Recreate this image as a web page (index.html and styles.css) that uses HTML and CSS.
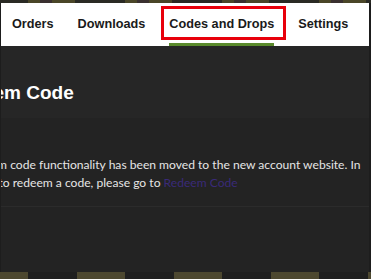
FILE: index.html
```html
<!DOCTYPE html>
<html lang="en">

<head>
    <meta charset="UTF-8">
    <meta name="viewport" content="width=device-width, initial-scale=1.0">
    <title>Codes and Drops</title>
    <link rel="stylesheet" href="styles.css">
</head>

<body>
    <div class="top-strip"></div>

    <nav class="tabs">
        <a class="tab" href="#">Orders</a>
        <a class="tab" href="#">Downloads</a>
        <a class="tab active marked" href="#"><span class="tab-label">Codes and Drops</span></a>
        <a class="tab" href="#">Settings</a>
    </nav>

    <main>
        <header class="title-bar">
            <h1>Redeem Code</h1>
        </header>

        <section class="content">
            <p>
                Redeem code functionality has been moved to the new account website. In<br>
                order to redeem a code, please go to <a href="#" class="link">Redeem Code</a>
            </p>
            <div class="divider"></div>
        </section>
    </main>

    <div class="bottom-strip"></div>
</body>

</html>
```

FILE: styles.css
```css
body {
    font-family: "Liberation Sans", Arial, sans-serif;
    background-color: #1d1d1d;
    margin: 0;
    padding: 0 2px 0 1px;
    overflow: hidden;
    height: 279px;
}

.top-strip {
    height: 3px;
    margin: 0 -2px 0 -1px;
    background: repeating-linear-gradient(90deg, #2a2a24 0, #2a2a24 28px, #4a4628 28px, #4a4628 40px, #3a3030 40px, #3a3030 52px, #4a4628 52px, #4a4628 75px, #2a2a24 75px, #2a2a24 97px);
}

.tabs {
    display: flex;
    height: 43px;
    background-color: #ffffff;
}

.tab {
    position: relative;
    display: flex;
    padding: 0 12px;
    color: #1a1a1a;
    font-weight: bold;
    font-size: 12.7px;
    text-decoration: none;
    align-items: center;
    padding-bottom: 1px;
}

.tab:first-child {
    padding-left: 11px;
}

.tab-label {
    display: flex;
    align-items: center;
    height: 100%;
    box-sizing: border-box;
    padding-top: 2px;
    border-bottom: 3px solid transparent;
}

.tab.active {
    padding-bottom: 0;
}

.tab.active .tab-label {
    border-bottom-color: #5a8a2c;
}

.tab.marked::after {
    content: "";
    position: absolute;
    left: 4px;
    right: 0;
    top: 3px;
    bottom: 6px;
    border: 3px solid #e8000b;
}

main {
    background-color: #232323;
}

.title-bar {
    background-color: #262626;
    height: 72px;
    overflow: hidden;
}

h1 {
    margin: 0 0 0 -54px;
    padding-top: 33px;
    color: #ffffff;
    font-size: 19px;
    line-height: 28px;
}

.content {
    height: 154px;
    overflow: hidden;
}

p {
    margin: 0 0 0 -34px;
    padding-top: 38px;
    text-indent: -3px;
    color: #e6e6e6;
    font-family: Lato, "Liberation Sans", sans-serif;
    font-size: 12.1px;
    line-height: 18px;
    white-space: nowrap;
}

.link {
    color: #3a2a78;
    text-decoration: none;
}

.divider {
    margin-top: 14px;
    height: 1px;
    background-color: #2b2b2b;
}

.bottom-strip {
    height: 7px;
    margin: 0 -2px 0 -1px;
    background: repeating-linear-gradient(90deg, #4d4830 0, #4d4830 28px, #1f1f1f 28px, #1f1f1f 77px, #4d4830 77px, #4d4830 97px);
}
```
